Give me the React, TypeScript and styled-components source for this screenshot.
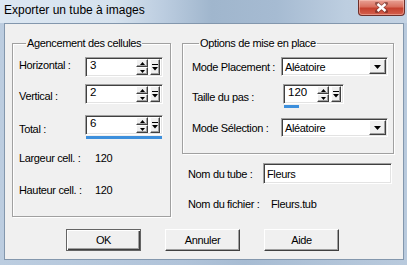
import styled, { createGlobalStyle } from 'styled-components';

const GlobalStyle = createGlobalStyle`
  html, body {
    margin: 0;
    padding: 0;
  }
  body {
    width: 407px;
    height: 265px;
    overflow: hidden;
    background: #b7c9dd;
    font-family: "Liberation Sans", Arial, sans-serif;
  }
`;

const Window = styled.div`
  width: 407px;
  height: 265px;
  display: flex;
  flex-direction: column;
  background: linear-gradient(90deg, #bccde0 0%, #b0c3d9 45%, #a7bcd3 60%, #b9cadd 100%);
`;

const TitleBar = styled.div`
  height: 23px;
  flex-shrink: 0;
  display: flex;
  justify-content: space-between;
  align-items: flex-start;
  padding-left: 4px;
  background: linear-gradient(90deg, #dce7f2 0%, #d6e2ee 28%, #bccde0 40%, #a0b6cd 52%, #a6bbd2 68%, #bdcee0 85%, #c3d2e3 100%);
`;

const Title = styled.span`
  font-size: 12px;
  line-height: 14px;
  padding-top: 3px;
  color: #000;
`;

const CloseButton = styled.div`
  width: 45px;
  height: 15px;
  margin-right: 2px;
  display: flex;
  align-items: center;
  justify-content: center;
  border: 1px solid #6e2f2a;
  border-top: none;
  border-radius: 0 0 4px 4px;
  background: linear-gradient(180deg, #e8a195 0%, #d9705f 45%, #c5412f 55%, #d4604e 100%);
  box-shadow: inset 0 0 0 1px rgba(255, 210, 200, 0.45);
`;

const Frame = styled.div`
  flex: 1;
  display: flex;
  padding: 0 3px 5px 4px;
`;

const Client = styled.div`
  flex: 1;
  display: flex;
  flex-direction: column;
  background: #f0f0f0;
  border: 1px solid #8397ad;
  padding: 13px 0 0 7px;
  font-size: 11px;
  letter-spacing: -0.35px;
  color: #000;
`;

const Top = styled.div`
  display: flex;
  gap: 11px;
`;

const Group = styled.fieldset<{ $w: number; $h: number; $pl: number }>`
  margin: 0;
  padding: 0 0 0 ${p => p.$pl}px;
  min-width: 0;
  width: ${p => p.$w}px;
  height: ${p => p.$h}px;
  box-sizing: border-box;
  border: 1px solid #a0a0a0;
  box-shadow: inset 1px 1px 0 #fff, 1px 1px 0 #fff;
`;

const Legend = styled.legend`
  margin-left: 7px;
  padding: 0 1px;
  line-height: 12px;
`;

const Row = styled.div<{ $mt: number }>`
  display: flex;
  align-items: flex-start;
  margin-top: ${p => p.$mt}px;
`;

const Label = styled.span<{ $w: number; $dy?: number }>`
  width: ${p => p.$w}px;
  flex-shrink: 0;
  line-height: 12px;
  padding-top: ${p => p.$dy ?? 0}px;
  white-space: nowrap;
`;

const Sunken = styled.div<{ $w: number; $h: number }>`
  width: ${p => p.$w}px;
  height: ${p => p.$h}px;
  box-sizing: border-box;
  display: flex;
  align-items: flex-start;
  background: #fff;
  border: 1px solid;
  border-color: #a0a0a0 #fff #fff #a0a0a0;
  box-shadow: inset 1px 1px 0 #404040, inset -1px -1px 0 #e3e3e3;
  padding: 1px;
`;

const EditText = styled.span<{ $size?: number; $mt?: number; $pl?: number }>`
  flex: 1;
  font-size: ${p => p.$size ?? 11}px;
  letter-spacing: ${p => (p.$size ? 0 : -0.35)}px;
  line-height: 12px;
  margin-top: ${p => p.$mt ?? 0}px;
  padding-left: ${p => p.$pl ?? 3}px;
  white-space: nowrap;
`;

const SpinColumn = styled.div`
  display: flex;
  flex-direction: column;
`;

const Progress = styled.div<{ $w: number; $ml: number }>`
  width: ${p => p.$w}px;
  height: 3px;
  margin: 1px 0 0 ${p => p.$ml}px;
  background: #3d8fdc;
`;

const SpinPair = styled.div`
  width: 12px;
  height: 100%;
  display: flex;
  flex-direction: column;
`;

const Raised = styled.div<{ $w?: number }>`
  ${p => (p.$w ? `width: ${p.$w}px;` : '')}
  flex: 1;
  box-sizing: border-box;
  display: flex;
  align-items: center;
  justify-content: center;
  background: #f0f0f0;
  border: 1px solid;
  border-color: #fff #404040 #404040 #fff;
  box-shadow: inset -1px -1px 0 #a0a0a0;
`;

const SliderButton = styled(Raised)`
  flex: none;
  width: 10px;
  height: 100%;
  margin: 0 1px 0 2px;
`;

const DropButton = styled(Raised)`
  flex: none;
  width: 17px;
  height: 100%;
`;

const Value = styled.span<{ $w?: number }>`
  line-height: 12px;
  padding-top: 0;
`;

const PushButton = styled.div<{ $default?: boolean }>`
  width: 75px;
  height: 22px;
  box-sizing: border-box;
  display: flex;
  align-items: center;
  justify-content: center;
  background: #f0f0f0;
  border: 1px solid;
  border-color: ${p => (p.$default ? '#646464' : '#fff #404040 #404040 #fff')};
  box-shadow: ${p =>
    p.$default
      ? 'inset 1px 1px 0 #fff, inset -1px -1px 0 #404040, inset -2px -2px 0 #a0a0a0'
      : 'inset -1px -1px 0 #a0a0a0'};
  line-height: 12px;
`;

const Buttons = styled.div`
  display: flex;
  gap: 24px;
  margin-top: 12px;
  padding-left: 54px;
`;

const RightColumn = styled.div`
  width: 212px;
  display: flex;
  flex-direction: column;
`;

const Line = styled.div<{ $mt: number; $pl: number }>`
  display: flex;
  align-items: flex-start;
  margin-top: ${p => p.$mt}px;
  padding-left: ${p => p.$pl}px;
`;

const Up = () => (
  <svg width="5" height="3" viewBox="0 0 5 3">
    <path d="M2.5 0 L5 3 L0 3 Z" fill="#000" />
  </svg>
);

const Down = () => (
  <svg width="5" height="3" viewBox="0 0 5 3">
    <path d="M0 0 L5 0 L2.5 3 Z" fill="#000" />
  </svg>
);

const SliderIcon = () => (
  <svg width="6" height="7" viewBox="0 0 6 7">
    <rect x="0" y="0" width="6" height="1" fill="#000" />
    <path d="M0 3 L6 3 L3 6.5 Z" fill="#000" />
  </svg>
);

const ComboArrow = () => (
  <svg width="7" height="4" viewBox="0 0 7 4">
    <path d="M0 0 L7 0 L3.5 4 Z" fill="#000" />
  </svg>
);

const CloseIcon = () => (
  <svg width="13" height="11" viewBox="0 0 13 11">
    <path
      d="M2 1.5 L11 9.5 M11 1.5 L2 9.5"
      stroke="#5a2420"
      strokeWidth="4"
      strokeLinecap="round"
      opacity="0.55"
    />
    <path d="M2.5 2 L10.5 9 M10.5 2 L2.5 9" stroke="#fff" strokeWidth="2.4" strokeLinecap="butt" />
  </svg>
);

const Spin = ({ value, w, bar }: { value: string; w: number; bar?: { w: number; ml: number } }) => (
  <SpinColumn>
    <Sunken $w={w} $h={20}>
      <EditText $size={11.5} $mt={0} $pl={3}>
        {value}
      </EditText>
      <SpinPair>
        <Raised>
          <Up />
        </Raised>
        <Raised>
          <Down />
        </Raised>
      </SpinPair>
      <SliderButton>
        <SliderIcon />
      </SliderButton>
    </Sunken>
    {bar && <Progress $w={bar.w} $ml={bar.ml} />}
  </SpinColumn>
);

const Combo = ({ value }: { value: string }) => (
  <Sunken $w={107} $h={19}>
    <EditText $mt={2} $pl={2}>
      {value}
    </EditText>
    <DropButton>
      <ComboArrow />
    </DropButton>
  </Sunken>
);

export default function App() {
  return (
    <>
      <GlobalStyle />
      <Window>
        <TitleBar>
          <Title>Exporter un tube à images</Title>
          <CloseButton>
            <CloseIcon />
          </CloseButton>
        </TitleBar>
        <Frame>
          <Client>
            <Top>
              <Group $w={159} $h={180} $pl={6}>
                <Legend>Agencement des cellules</Legend>
                <Row $mt={8}>
                  <Label $w={66} $dy={2}>Horizontal :</Label>
                  <Spin value="3" w={78} />
                </Row>
                <Row $mt={7}>
                  <Label $w={66} $dy={6}>Vertical :</Label>
                  <Spin value="2" w={78} />
                </Row>
                <Row $mt={11}>
                  <Label $w={66} $dy={8}>Total :</Label>
                  <Spin value="6" w={78} bar={{ w: 76, ml: 1 }} />
                </Row>
                <Row $mt={13}>
                  <Label $w={76}>Largeur cell. :</Label>
                  <Value>120</Value>
                </Row>
                <Row $mt={20}>
                  <Label $w={76}>Hauteur cell. :</Label>
                  <Value>120</Value>
                </Row>
              </Group>
              <RightColumn>
                <Group $w={212} $h={117} $pl={9}>
                  <Legend>Options de mise en place</Legend>
                  <Row $mt={8}>
                    <Label $w={89} $dy={4}>Mode Placement :</Label>
                    <Combo value="Aléatoire" />
                  </Row>
                  <Row $mt={8}>
                    <Label $w={91} $dy={7}>Taille du pas :</Label>
                    <Spin value="120" w={61} bar={{ w: 15, ml: 1 }} />
                  </Row>
                  <Row $mt={10}>
                    <Label $w={89} $dy={4}>Mode Sélection :</Label>
                    <Combo value="Aléatoire" />
                  </Row>
                </Group>
                <Line $mt={9} $pl={6}>
                  <Label $w={75} $dy={5}>Nom du tube :</Label>
                  <Sunken $w={129} $h={21}>
                    <EditText $mt={3} $pl={2}>
                      Fleurs
                    </EditText>
                  </Sunken>
                </Line>
                <Line $mt={14} $pl={6}>
                  <Label $w={83}>Nom du fichier :</Label>
                  <Value>Fleurs.tub</Value>
                </Line>
              </RightColumn>
            </Top>
            <Buttons>
              <PushButton $default>OK</PushButton>
              <PushButton>Annuler</PushButton>
              <PushButton>Aide</PushButton>
            </Buttons>
          </Client>
        </Frame>
      </Window>
    </>
  );
}
